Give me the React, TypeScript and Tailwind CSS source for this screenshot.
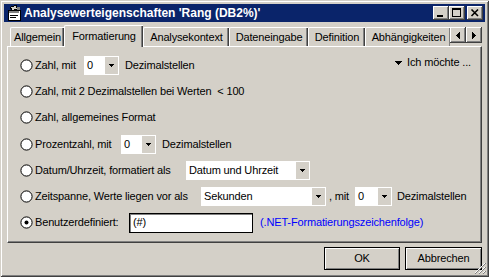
import React from "react";

const F = "font-['Liberation_Sans',Arial,sans-serif]";

function Radio({ checked }: { checked?: boolean }) {
  return (
    <svg width="13" height="13" viewBox="0 0 13 13" className="shrink-0">
      <circle cx="6.5" cy="6.5" r="5.6" fill="#fff" stroke="#000" strokeWidth="1" />
      {checked && <circle cx="6.5" cy="6.5" r="2" fill="#000" />}
    </svg>
  );
}

function DownTri() {
  return (
    <svg width="5" height="3" viewBox="0 0 5 3" shapeRendering="crispEdges">
      <rect x="0" y="0" width="5" height="1" fill="#000" />
      <rect x="1" y="1" width="3" height="1" fill="#000" />
      <rect x="2" y="2" width="1" height="1" fill="#000" />
    </svg>
  );
}

function Combo({ w, text }: { w: string; text: string }) {
  return (
    <div className={`flex h-[19px] border border-white bg-white shrink-0 ${w}`}>
      <div className="flex-1 pl-[2px] flex items-center leading-none overflow-hidden whitespace-nowrap">{text}</div>
      <div className="w-[13px] bg-[#D4D0C8] flex items-center justify-center">
        <DownTri />
      </div>
    </div>
  );
}

function Row({ checked, children }: { checked?: boolean; children: React.ReactNode }) {
  return (
    <div className="flex items-center h-[26.3px] whitespace-nowrap">
      <Radio checked={checked} />
      <div className="ml-[2px] flex items-center">{children}</div>
    </div>
  );
}

function CapBtn({ children, className = "" }: { children: React.ReactNode; className?: string }) {
  return (
    <div
      className={`w-[16px] h-[14px] bg-[#D4D0C8] flex items-center justify-center shadow-[inset_-1px_-1px_0_#404040,inset_1px_1px_0_#fff,inset_-2px_-2px_0_#808080] ${className}`}
    >
      {children}
    </div>
  );
}

function ScrollBtn({ children }: { children: React.ReactNode }) {
  return (
    <div className="w-[16px] h-[16px] bg-[#D4D0C8] flex items-center justify-center shadow-[inset_-1px_-1px_0_#404040,inset_1px_1px_0_#fff,inset_-2px_-2px_0_#808080]">
      {children}
    </div>
  );
}

function AppIcon() {
  return (
    <svg width="16" height="16" viewBox="0 0 16 16" shapeRendering="crispEdges" className="shrink-0">
      <rect x="2" y="5" width="12" height="10" fill="#fff" stroke="#000" strokeWidth="1" />
      <rect x="3" y="6" width="10" height="2" fill="#808080" />
      <rect x="4" y="10" width="8" height="1" fill="#000" />
      <rect x="4" y="12" width="6" height="1" fill="#000" />
      <rect x="5" y="1" width="6" height="4" fill="#D4D0C8" stroke="#000" strokeWidth="1" transform="rotate(-20 8 3)" />
      <rect x="11" y="2" width="3" height="3" fill="#808080" />
    </svg>
  );
}

const tabs = [
  { label: "Allgemein", w: "w-[54px]" },
  { label: "Formatierung", w: "w-[79px]", sel: true },
  { label: "Analysekontext", w: "w-[86px]" },
  { label: "Dateneingabe", w: "w-[79px]" },
  { label: "Definition", w: "w-[57px]" },
  { label: "Abhängigkeiten", w: "w-[86px]" },
];

export default function App() {
  return (
    <div
      className={`relative w-[489px] h-[277px] bg-[#D4D0C8] p-[4px] flex flex-col text-[11px] leading-[13px] tracking-[-0.15px] text-black ${F} shadow-[inset_1px_1px_0_#D4D0C8,inset_-1px_-1px_0_#404040,inset_2px_2px_0_#fff,inset_-2px_-2px_0_#808080]`}
    >
      {/* Title bar */}
      <div className="h-[18px] shrink-0 bg-[#0A246A] flex items-center pl-[2px] pr-[2px]">
        <AppIcon />
        <span className="ml-[2px] text-white font-bold text-[12px] leading-none tracking-normal whitespace-nowrap">
          Analysewerteigenschaften 'Rang (DB2%)'
        </span>
        <div className="ml-auto flex items-center">
          <CapBtn>
            <svg width="16" height="14" viewBox="0 0 16 14" shapeRendering="crispEdges">
              <rect x="4" y="9" width="6" height="2" fill="#000" />
            </svg>
          </CapBtn>
          <CapBtn>
            <svg width="16" height="14" viewBox="0 0 16 14" shapeRendering="crispEdges">
              <rect x="3.5" y="2.5" width="8" height="8" fill="none" stroke="#000" />
              <rect x="3" y="3" width="9" height="1" fill="#000" />
            </svg>
          </CapBtn>
          <CapBtn className="ml-[2px]">
            <svg width="16" height="14" viewBox="0 0 16 14">
              <path d="M4.5 3.5 L11 10 M11 3.5 L4.5 10" stroke="#000" strokeWidth="1.6" />
            </svg>
          </CapBtn>
        </div>
      </div>

      {/* Tab strip */}
      <div className="mt-[3px] h-[22px] shrink-0 flex pl-[6px] pr-[3px] relative z-10">
        <div className="flex-1 flex overflow-hidden items-start">
          {tabs.map((t) =>
            t.sel ? (
              <div
                key={t.label}
                className={`${t.w} shrink-0 h-[22px] bg-[#D4D0C8] border-l border-t border-white rounded-tl-[2px] shadow-[inset_-1px_0_0_#404040,inset_-2px_0_0_#808080] flex items-start justify-center pt-[4px] whitespace-nowrap`}
              >
                {t.label}
              </div>
            ) : (
              <div
                key={t.label}
                className={`${t.w} shrink-0 mt-[2px] h-[19px] bg-[#D4D0C8] border-l border-t border-white rounded-tl-[2px] shadow-[inset_-1px_0_0_#404040,inset_-2px_0_0_#808080] flex items-start justify-center pt-[3px] whitespace-nowrap`}
              >
                {t.label}
              </div>
            )
          )}
        </div>
        <div className="flex mt-[2px] shrink-0">
          <ScrollBtn>
            <svg width="4" height="7" viewBox="0 0 4 7" shapeRendering="crispEdges">
              <path d="M3 0 H4 V7 H3 Z M2 1 H3 V6 H2 Z M1 2 H2 V5 H1 Z M0 3 H1 V4 H0 Z" fill="#000" />
            </svg>
          </ScrollBtn>
          <ScrollBtn>
            <svg width="4" height="7" viewBox="0 0 4 7" shapeRendering="crispEdges">
              <path d="M0 0 H1 V7 H0 Z M1 1 H2 V6 H1 Z M2 2 H3 V5 H2 Z M3 3 H4 V4 H3 Z" fill="#000" />
            </svg>
          </ScrollBtn>
        </div>
      </div>

      {/* Panel */}
      <div className="-mt-[1px] mx-[3px] h-[197px] shrink-0 border-t border-l border-white border-r border-b border-r-[#404040] border-b-[#404040] shadow-[inset_-1px_-1px_0_#808080] pt-[5px] pl-[12px] pr-[10px] flex flex-col">
        <div className="flex items-start">
          <Row>
            <span className="w-[49px]">Zahl, mit</span>
            <Combo w="w-[35px]" text="0" />
            <span className="ml-[6px]">Dezimalstellen</span>
          </Row>
          <div className="ml-auto mt-[4px] flex items-center whitespace-nowrap">
            <svg width="7" height="4" viewBox="0 0 7 4" shapeRendering="crispEdges" className="mr-[5px]">
              <path d="M0 0 H7 V1 H0 Z M1 1 H6 V2 H1 Z M2 2 H5 V3 H2 Z M3 3 H4 V4 H3 Z" fill="#000" />
            </svg>
            <span>Ich möchte ...</span>
          </div>
        </div>
        <Row>
          <span>Zahl, mit 2 Dezimalstellen bei Werten&nbsp; &lt; 100</span>
        </Row>
        <Row>
          <span>Zahl, allgemeines Format</span>
        </Row>
        <Row>
          <span className="w-[86px]">Prozentzahl, mit</span>
          <Combo w="w-[35px]" text="0" />
          <span className="ml-[6px]">Dezimalstellen</span>
        </Row>
        <Row>
          <span className="w-[151px]">Datum/Uhrzeit, formatiert als</span>
          <Combo w="w-[124px]" text="Datum und Uhrzeit" />
        </Row>
        <Row>
          <span className="w-[166px]">Zeitspanne, Werte liegen vor als</span>
          <Combo w="w-[125px]" text="Sekunden" />
          <span className="ml-[3px] w-[26px]">, mit</span>
          <Combo w="w-[37px]" text="0" />
          <span className="ml-[5px]">Dezimalstellen</span>
        </Row>
        <Row checked>
          <span className="w-[94px]">Benutzerdefiniert:</span>
          <div className="w-[124px] h-[20px] bg-white border border-black shadow-[inset_1px_1px_0_#808080] pl-[3px] flex items-center">
            (#)
          </div>
          <span className="ml-[7px] text-[#0000FF]">(.NET-Formatierungszeichenfolge)</span>
        </Row>
      </div>

      {/* Buttons */}
      <div className="mt-[4px] flex justify-end gap-[5px] pr-[3px]">
        <div className="w-[76px] h-[23px] border border-black bg-[#D4D0C8] shadow-[inset_1px_1px_0_#fff,inset_-1px_-1px_0_#808080] flex items-center justify-center">
          OK
        </div>
        <div className="w-[77px] h-[23px] border border-black bg-[#D4D0C8] shadow-[inset_1px_1px_0_#fff,inset_-1px_-1px_0_#808080] flex items-center justify-center">
          Abbrechen
        </div>
      </div>

      {/* Size grip */}
      <svg width="12" height="12" viewBox="0 0 12 12" className="absolute right-[3px] bottom-[3px]" shapeRendering="crispEdges">
        <path d="M11 1 L1 11 M11 5 L5 11 M11 9 L9 11" stroke="#fff" strokeWidth="1" />
        <path d="M12 1 L1 12 M12 5 L5 12 M12 9 L9 12" stroke="#808080" strokeWidth="1" />
      </svg>
    </div>
  );
}
